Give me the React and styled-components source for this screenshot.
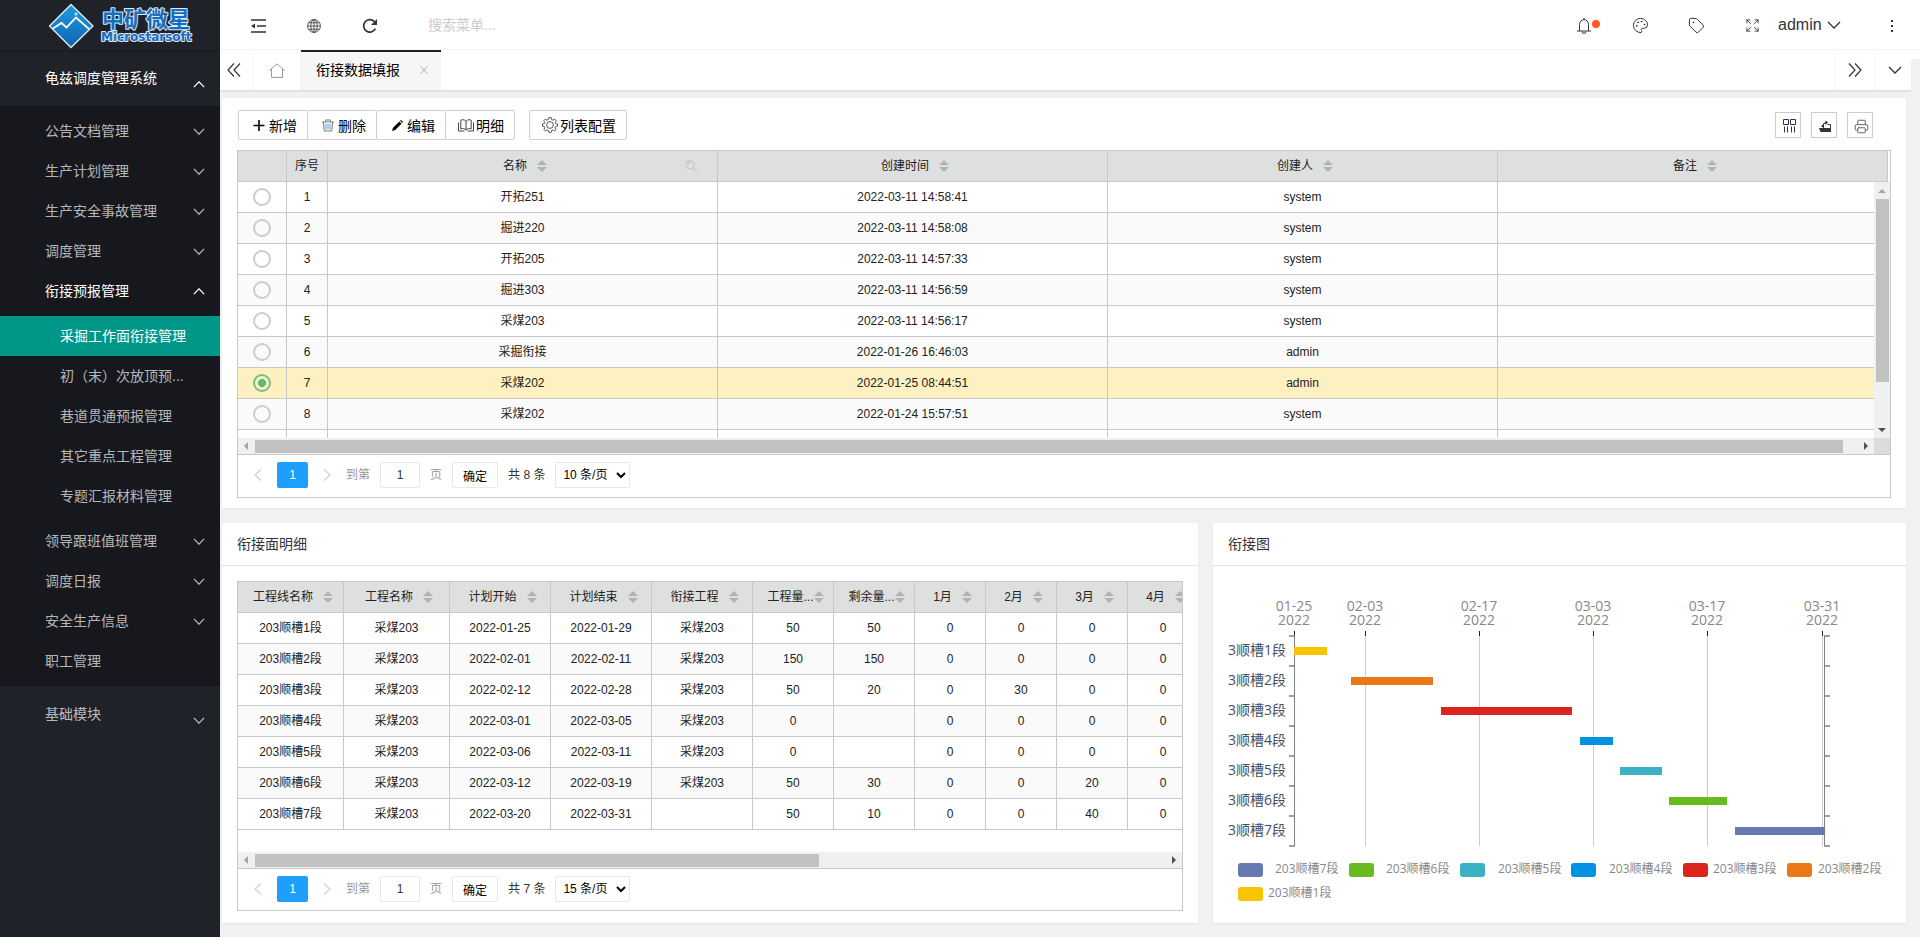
import { useState } from "react"
import styled, { createGlobalStyle, css } from "styled-components"
import { Expand, Palette, Printer, Tag } from "lucide-react"

const GlobalStyle = createGlobalStyle`
    * {
        box-sizing: border-box;
    }
    body {
        margin: 0;
        background-color: #f1f1f1;
        color: #333;
        font: 14px/24px "Liberation Sans", "Noto Sans CJK SC", sans-serif;
    }
    button, input, select {
        font-family: inherit;
    }
    svg {
        display: block;
    }
`;

const Container = styled.div`
    display: flex;
    min-height: 100vh;
`;

/* ---------- sidebar ---------- */

const Side = styled.nav`
    flex: 0 0 220px;
    background-color: #20222a;
    overflow: hidden;
`;

const Logo = styled.div`
    height: 50px;
    padding-left: 48px;
    box-shadow: 0 1px 2px rgba(0, 0, 0, 0.25);
`;

const SideGroup = styled.a`
    display: flex;
    align-items: center;
    justify-content: space-between;
    height: 56px;
    padding: 0 15px 0 45px;
    text-decoration: none;
    color: ${props => props.$open ? "#fff" : "rgba(255, 255, 255, 0.7)"};

    svg {
        margin-top: 12px;
    }
`;

const SubMenu = styled.div`
    padding: 5px 0;
    background-color: #16181d;
`;

const SubItem = styled.a`
    display: flex;
    align-items: center;
    justify-content: space-between;
    height: 40px;
    padding: 0 15px 0 45px;
    text-decoration: none;
    color: ${props => props.$open ? "#fff" : "rgba(255, 255, 255, 0.7)"};
`;

const LeafList = styled.div`
    padding: 5px 0;
`;

const Leaf = styled.a`
    display: block;
    height: 40px;
    padding-left: 60px;
    line-height: 40px;
    text-decoration: none;
    color: ${props => props.$active ? "#fff" : "rgba(255, 255, 255, 0.7)"};
    background-color: ${props => props.$active ? "#009688" : "transparent"};
`;

/* ---------- header ---------- */

const Main = styled.div`
    flex: 1;
    min-width: 0;
    position: relative;
`;

const Header = styled.header`
    display: flex;
    justify-content: space-between;
    height: 50px;
    padding-left: 10px;
    background-color: #fff;
    border-bottom: 1px solid #f6f6f6;
`;

const HeaderSide = styled.div`
    display: flex;
    align-items: center;
`;

const HeaderButton = styled.button`
    position: relative;
    display: flex;
    align-items: center;
    justify-content: center;
    width: 56px;
    height: 50px;
    padding: 2px 0 0;
    border: 0;
    background: none;
    color: #333;
`;

const Dot = styled.span`
    position: absolute;
    left: 36px;
    top: 20px;
    width: 8px;
    height: 8px;
    border-radius: 50%;
    background-color: #ff5722;
`;

const Search = styled.input`
    width: 160px;
    height: 30px;
    margin-left: 28px;
    padding: 0 2px;
    border: 0;
    outline: none;
    font-size: 14px;

    &::placeholder {
        color: #ccc;
    }
`;

const User = styled.button`
    display: flex;
    align-items: center;
    gap: 5px;
    width: 86px;
    height: 50px;
    margin-left: -2px;
    padding: 0;
    border: 0;
    background: none;
    color: #333;
    font-size: 16px;
`;

const Tabs = styled.div`
    display: flex;
    height: 40px;
    background-color: #fff;
    box-shadow: 0 1px 2px rgba(0, 0, 0, 0.12);
`;

const TabControl = styled.button`
    display: flex;
    align-items: center;
    justify-content: center;
    width: ${props => props.$width}px;
    padding: 0 6px 0 0;
    border: 0;
    border-right: ${props => props.$side === "right" ? "1px solid #f6f6f6" : "0"};
    border-left: ${props => props.$side === "left" ? "1px solid #f6f6f6" : "0"};
    background: none;
    color: #333;
`;

const TabControlCentered = styled(TabControl)`
    padding: 0;
`;

const Tab = styled.div`
    display: flex;
    align-items: center;
    justify-content: space-between;
    width: 140px;
    padding: 0 13px 2px 15px;
    border-top: 2px solid #20222a;
    background-color: #f6f6f6;
    color: #000;
    margin-right: auto;
`;

const TabClose = styled.button`
    display: flex;
    padding: 0;
    border: 0;
    background: none;
    color: #c2c2c2;
`;

/* the page frame's own scroll track, it lies over the tab bar's end */
const FrameTrack = styled.div`
    position: absolute;
    top: 59px;
    right: 0;
    bottom: 0;
    width: 9px;
    background-color: #f1f1f1;
`;

/* ---------- cards ---------- */

const Content = styled.main`
    display: flex;
    flex-direction: column;
    gap: 15px;
    padding: 8px 14px 14px 2px;
`;

const Row = styled.div`
    display: grid;
    grid-template-columns: 976fr 693fr;
    gap: 15px;
`;

const Card = styled.section`
    min-width: 0;
    border-radius: 2px;
    background-color: #fff;
    box-shadow: 0 1px 2px rgba(0, 0, 0, 0.05);
`;

const CardTitle = styled.h2`
    height: 43px;
    margin: 0;
    padding: 0 15px;
    border-bottom: 1px solid #e2e2e2;
    font-size: 14px;
    font-weight: normal;
    line-height: 42px;
`;

const CardBody = styled.div`
    padding: ${props => props.$top}px 15px ${props => props.$bottom}px;
`;

const Toolbar = styled.div`
    display: flex;
    justify-content: space-between;
    align-items: center;
    height: 30px;
    margin-bottom: 10px;
    padding: 0 18px 0 1px;
`;

const ButtonGroup = styled.div`
    display: flex;
`;

const ToolButton = styled.button`
    display: flex;
    align-items: center;
    justify-content: center;
    gap: 2px;
    width: ${props => props.$wide ? 98 : 70}px;
    height: 30px;
    margin-left: ${props => props.$wide ? 14 : -1}px;
    padding: 0 0 0 2px;
    border: 1px solid #d0d0d0;
    border-radius: 2px;
    background-color: #fff;
    color: #000;
    font-size: 14px;
    white-space: nowrap;

    &:first-child {
        margin-left: 0;
    }
`;

const IconTools = styled.div`
    display: flex;
    gap: 10px;
`;

const IconTool = styled.button`
    display: flex;
    align-items: center;
    justify-content: center;
    width: 26px;
    height: 26px;
    padding: 2px 0 0 2px;
    border: 1px solid #ccc;
    background-color: #fff;
    color: #333;
`;

/* ---------- tables ---------- */

const TableBox = styled.div`
    border: 1px solid #c8c8c8;
    overflow: hidden;
`;

const Table = styled.table`
    width: ${props => props.$width};
    table-layout: fixed;
    border-collapse: separate;
    border-spacing: 0;
    font-size: 12px;
    line-height: 30px;
`;

const cell = css`
    height: 31px;
    padding: 0;
    border-right: 1px solid #c8c8c8;
    border-bottom: 1px solid #c8c8c8;
    text-align: center;
    font-weight: normal;
    white-space: nowrap;
    color: #222;
`;

const Th = styled.th`
    ${cell}
    background-color: #dee0df;
`;

const Td = styled.td`
    ${cell}
`;

const Tr = styled.tr`
    background-color: ${props => props.$selected ? "#fef1c1" : "#fff"};

    &:nth-child(even) {
        background-color: ${props => props.$selected ? "#fef1c1" : "#fafafa"};
    }
`;

const HeadCell = styled.div`
    position: relative;
    display: flex;
    align-items: center;
    justify-content: center;
    gap: ${props => props.$tight ? 0 : 10}px;
    margin-right: -5px;
`;

const ColumnFilter = styled.span`
    position: absolute;
    right: 25px;
    color: #c8c8c8;
`;

const BodyRow = styled.div`
    display: flex;
    height: ${props => props.$height}px;
`;

const BodyView = styled.div`
    flex: 1;
    min-width: 0;
    overflow: hidden;
`;

const Radio = styled.input`
    appearance: none;
    display: block;
    width: 18px;
    height: 18px;
    margin: 0 auto;
    border: 2px solid #ccc;
    border-radius: 50%;

    &:checked {
        border-color: #75c08a;
        background: radial-gradient(circle, #5fb878 0 4px, transparent 4px);
        background-clip: border-box;
        background-origin: border-box;
    }
`;

const VScroll = styled.div`
    flex: 0 0 16px;
    display: flex;
    flex-direction: column;
    align-items: center;
    background-color: #f0f0f0;
`;

const HScroll = styled.div`
    display: flex;
    align-items: center;
    height: 16px;
    background-color: #f0f0f0;
`;

const ScrollArrow = styled.span`
    flex: 0 0 17px;
    display: flex;
    align-items: center;
    justify-content: center;
    color: ${props => props.$off ? "#a3a3a3" : "#505050"};
`;

const HTrack = styled.div`
    flex: 1;
`;

const HThumb = styled.div`
    width: ${props => props.$size};
    height: 13px;
    background-color: #c1c1c1;
`;

const VTrack = styled.div`
    flex: 1;
    width: 13px;
`;

const VThumb = styled.div`
    height: 183px;
    background-color: #c1c1c1;
`;

const Corner = styled.div`
    flex: 0 0 16px;
    height: 16px;
    background-color: #dcdcdc;
`;

/* ---------- pager ---------- */

const PagerBar = styled.div`
    display: flex;
    align-items: flex-start;
    height: ${props => props.$height}px;
    padding: 7px 0 0 1px;
    border-top: 1px solid #c8c8c8;
    font-size: 12px;
    line-height: 26px;
`;

const PageArrow = styled.button`
    display: flex;
    align-items: center;
    justify-content: center;
    width: 38px;
    height: 26px;
    padding: 0;
    border: 0;
    background: none;
    color: #d2d2d2;
`;

const PageNumber = styled.button`
    width: 31px;
    height: 26px;
    padding: 0;
    border: 0;
    border-radius: 2px;
    background-color: #1e9fff;
    color: #fff;
    font-size: 12px;
`;

const Jump = styled.label`
    display: flex;
    gap: 10px;
    color: #999;
`;

const PageInput = styled.input`
    width: 40px;
    height: 26px;
    padding: 0;
    border: 1px solid #e8e8e8;
    border-radius: 2px;
    text-align: center;
    font-size: 12px;
    color: #333;
`;

const Confirm = styled.button`
    width: 46px;
    height: 26px;
    margin-left: 10px;
    padding: 0;
    border: 1px solid #e8e8e8;
    border-radius: 2px;
    background-color: #fff;
    color: #000;
    font-size: 12px;
`;

const Total = styled.span`
    margin: 0 10px;
`;

const PageSize = styled.select`
    width: 75px;
    height: 26px;
    padding: 0 0 0 3px;
    border: 1px solid #e8e8e8;
    border-radius: 2px;
    background-color: #fff;
    color: #000;
    font-size: 12px;
`;

const Chart = styled.svg`
    width: 100%;
    font-family: "Open Sans", "Noto Sans CJK SC", sans-serif;
`;

/* ---------- icons ---------- */

const chevrons = {
  down: "M1 1 L7 7 L13 1",
  up: "M1 7 L7 1 L13 7",
}

const Chevron = ({ dir = "down", width = 12, height = 7, stroke = 1.5 }) => (
  <svg width={width} height={height} viewBox="0 0 14 8" preserveAspectRatio="none" fill="none" stroke="currentColor" strokeWidth={stroke}>
    <path d={chevrons[dir]} />
  </svg>
)

const DoubleChevron = ({ right }) => (
  <svg width="16" height="16" viewBox="0 0 16 16" fill="none" stroke="currentColor" strokeWidth="1.2">
    <path d={right ? "M2 1.5 L8 8 L2 14.5 M8 1.5 L14 8 L8 14.5" : "M8 1.5 L2 8 L8 14.5 M14 1.5 L8 8 L14 14.5"} />
  </svg>
)

const SortIcon = () => (
  <svg width="10" height="12" viewBox="0 0 10 12" fill="#b2b2b2">
    <path d="M5 0 L10 5 H0 Z M0 7 H10 L5 12 Z" />
  </svg>
)

const Triangle = ({ dir }) => {
  const shapes = {
    left: "M6 1 V9 L2 5 Z",
    right: "M3 1 V9 L7 5 Z",
    up: "M1 7 H9 L5 3 Z",
    down: "M1 3 H9 L5 7 Z",
  }
  return (
    <svg width="10" height="10" viewBox="0 0 10 10" fill="currentColor">
      <path d={shapes[dir]} />
    </svg>
  )
}

const IndentIcon = () => (
  <svg width="16" height="14" viewBox="0 0 16 14" fill="none" stroke="currentColor" strokeWidth="1.4">
    <path d="M1 1 H16 M7 7 H16 M1 13 H16" />
    <path d="M5 4.5 V9.5 L1 7 Z" fill="currentColor" stroke="none" />
  </svg>
)

const GlobeIcon = () => (
  <svg width="14" height="14" viewBox="0 0 14 14" fill="none" stroke="currentColor" strokeWidth="0.8">
    <circle cx="7" cy="7" r="6.4" />
    <ellipse cx="7" cy="7" rx="3.2" ry="6.4" />
    <path d="M7 0.6 V13.4 M0.6 7 H13.4 M1.6 3.8 H12.4 M1.6 10.2 H12.4" />
  </svg>
)

const ReloadIcon = () => (
  <svg width="16" height="16" viewBox="0 0 16 16" fill="none" stroke="currentColor" strokeWidth="1.7">
    <path d="M13.4 10.6 A6.2 6.2 0 1 1 12.4 3.6" />
    <path d="M15 1 V7 H9 Z" fill="currentColor" stroke="none" />
  </svg>
)

const BellIcon = () => (
  <svg width="14" height="16" viewBox="0 0 14 16" fill="none" stroke="currentColor" strokeWidth="1">
    <path d="M0 13 H14 M2.5 13 V6.5 A4.5 4.9 0 0 1 11.5 6.5 V13 M5 13.5 A2 1.8 0 0 0 9 13.5 M7 0 V1.6" />
  </svg>
)

const MoreIcon = () => (
  <svg width="4" height="14" viewBox="0 0 4 14" fill="currentColor">
    <rect x="1" y="1" width="2" height="2" />
    <rect x="1" y="6" width="2" height="2" />
    <rect x="1" y="11" width="2" height="2" />
  </svg>
)

const HomeIcon = () => (
  <svg width="16" height="15" viewBox="0 0 16 15" fill="none" stroke="#999" strokeWidth="1">
    <path d="M0.4 7.6 L8 0.8 L15.6 7.6 M2.5 6 V14.4 H13.5 V6" />
  </svg>
)

const CloseIcon = () => (
  <svg width="8" height="8" viewBox="0 0 8 8" fill="none" stroke="currentColor" strokeWidth="1.1">
    <path d="M0.5 0.5 L7.5 7.5 M7.5 0.5 L0.5 7.5" />
  </svg>
)

const ToolIcon = ({ children }) => (
  <svg width="16" height="16" viewBox="0 0 16 16" fill="none" stroke="#000" strokeWidth="1">{children}</svg>
)

const PlusIcon = () => (
  <ToolIcon><path d="M2.5 8.5 H13.5 M8 3 V14" strokeWidth="1.6" /></ToolIcon>
)

const TrashIcon = () => (
  <ToolIcon>
    <path d="M2 5 H14 M5.5 4.5 V3 H10.5 V4.5 M3.5 5 L4.2 14 H11.8 L12.5 5" stroke="#777" />
    <path d="M6 7 V12.5 M8 7 V12.5 M10 7 V12.5" stroke="#5b9bd0" />
  </ToolIcon>
)

const PencilIcon = () => (
  <ToolIcon>
    <path d="M3 14 L4 10.8 L10.3 4.5 L12.5 6.7 L6.2 13 Z M11 3.8 L12 2.9 L14 4.9 L13.2 6 Z" fill="#000" stroke="none" />
  </ToolIcon>
)

const BookIcon = () => (
  <ToolIcon>
    <path d="M8 4.5 C6.5 2.3 4 2.5 2.8 3.2 V12 C4.5 11.2 6.6 11.5 8 13 C9.4 11.5 11.5 11.2 13.2 12 V3.2 C12 2.5 9.5 2.3 8 4.5 V13 M0.5 5.5 V14 H6.5 M15.5 5.5 V14 H9.5" stroke="#444" />
  </ToolIcon>
)

const GearIcon = () => (
  <ToolIcon>
    <circle cx="8" cy="8" r="3.4" stroke="#444" strokeWidth="0.9" />
    <path
      d="M6.8 0.6 H9.2 L9.6 2.6 L11 3.2 L12.7 2.1 L14.3 3.8 L13.1 5.4 L13.6 6.6 L15.5 7 V9.2 L13.6 9.6 L13.1 10.8 L14.2 12.5 L12.6 14 L11 12.9 L9.6 13.5 L9.2 15.4 H6.8 L6.4 13.5 L5 12.9 L3.4 14 L1.8 12.5 L2.9 10.8 L2.4 9.6 L0.5 9.2 V7 L2.4 6.6 L2.9 5.4 L1.7 3.8 L3.3 2.1 L5 3.2 L6.4 2.6 Z"
      stroke="#444"
      strokeWidth="0.9"
    />
  </ToolIcon>
)

const ColumnsIcon = () => (
  <svg width="14" height="14" viewBox="0 0 14 14" fill="none" stroke="#3d2a4d" strokeWidth="1">
    <path d="M1.5 0.5 H6.5 V5.5 H1.5 Z M8.5 0.5 H13.5 V5.5 H8.5 Z M2.5 7.5 V13.5 M5.5 7.5 V13.5 M9.5 7.5 V13.5 M12.5 7.5 V13.5" />
  </svg>
)

const ExportIcon = () => (
  <svg width="14" height="14" viewBox="0 0 14 14" fill="#333">
    <path d="M1 9 H13 L13 13 H2.5 Z M3 8 L4.5 5.5 H5.5 V8 Z" />
    <path d="M5 6 C5 4 6 3.2 7.5 3.2 V1.2 L10 3.6 L7.5 6 V4.4 C6.6 4.4 6 5 6 6 Z" />
    <path d="M9.5 5.5 H12.5 V9.5 M5.5 5.5 V9" fill="none" stroke="#333" />
  </svg>
)

const SearchIcon = () => (
  <svg width="12" height="12" viewBox="0 0 12 12" fill="none" stroke="currentColor" strokeWidth="1.3">
    <circle cx="5" cy="5" r="4" />
    <path d="M8 8 L11.4 11.4 M3 4 A2 2 0 0 1 5 3" />
  </svg>
)

const LogoMark = () => (
  <svg width="146" height="50" viewBox="0 0 146 50" role="img" aria-label="中矿微星">
    <defs>
      <linearGradient id="diamond" x1="0" y1="0" x2="0" y2="1">
        <stop offset="0" stopColor="#1d9be2" />
        <stop offset="1" stopColor="#1263ad" />
      </linearGradient>
    </defs>
    <path d="M23 4.5 L45 26 L23 47.5 L1.5 26 Z" fill="url(#diamond)" stroke="#dcebf7" strokeWidth="1.4" strokeLinejoin="round" />
    <path d="M5 28.5 L13.5 23 L18.5 27.5 L28 17.5 L41 29" fill="none" stroke="#fff" strokeWidth="1.8" />
    <circle cx="28" cy="14" r="1.6" fill="#bfe0f7" />
    <g fill="#1a6cbc" stroke="#dcebf7" strokeWidth="2" paintOrder="stroke" strokeLinejoin="round" fontWeight="700">
      <text x="54" y="27" fontSize="22" fontFamily="Noto Sans CJK SC, sans-serif">中矿微星</text>
      <text x="53" y="41" fontSize="12" fontFamily="DejaVu Sans, sans-serif">Microstarsoft</text>
    </g>
  </svg>
)

/* ---------- data ---------- */

const menu = [
  { name: "公告文档管理", arrow: true },
  { name: "生产计划管理", arrow: true },
  { name: "生产安全事故管理", arrow: true },
  { name: "调度管理", arrow: true },
  {
    name: "衔接预报管理",
    arrow: true,
    children: ["采掘工作面衔接管理", "初（末）次放顶预...", "巷道贯通预报管理", "其它重点工程管理", "专题汇报材料管理"],
  },
  { name: "领导跟班值班管理", arrow: true },
  { name: "调度日报", arrow: true },
  { name: "安全生产信息", arrow: true },
  { name: "职工管理" },
]

const reports = [
  ["开拓251", "2022-03-11 14:58:41", "system"],
  ["掘进220", "2022-03-11 14:58:08", "system"],
  ["开拓205", "2022-03-11 14:57:33", "system"],
  ["掘进303", "2022-03-11 14:56:59", "system"],
  ["采煤203", "2022-03-11 14:56:17", "system"],
  ["采掘衔接", "2022-01-26 16:46:03", "admin"],
  ["采煤202", "2022-01-25 08:44:51", "admin"],
  ["采煤202", "2022-01-24 15:57:51", "system"],
]

const detailColumns = [
  ["工程线名称", 106],
  ["工程名称", 106],
  ["计划开始", 101],
  ["计划结束", 101],
  ["衔接工程", 101],
  ["工程量...", 81],
  ["剩余量...", 81],
  ["1月", 71],
  ["2月", 71],
  ["3月", 71],
  ["4月", 71],
]

const details = [
  ["203顺槽1段", "采煤203", "2022-01-25", "2022-01-29", "采煤203", "50", "50", "0", "0", "0", "0"],
  ["203顺槽2段", "采煤203", "2022-02-01", "2022-02-11", "采煤203", "150", "150", "0", "0", "0", "0"],
  ["203顺槽3段", "采煤203", "2022-02-12", "2022-02-28", "采煤203", "50", "20", "0", "30", "0", "0"],
  ["203顺槽4段", "采煤203", "2022-03-01", "2022-03-05", "采煤203", "0", "", "0", "0", "0", "0"],
  ["203顺槽5段", "采煤203", "2022-03-06", "2022-03-11", "采煤203", "0", "", "0", "0", "0", "0"],
  ["203顺槽6段", "采煤203", "2022-03-12", "2022-03-19", "采煤203", "50", "30", "0", "0", "20", "0"],
  ["203顺槽7段", "采煤203", "2022-03-20", "2022-03-31", "", "50", "10", "0", "0", "40", "0"],
]

const chartDates = [
  ["01-25", 81],
  ["02-03", 152],
  ["02-17", 266],
  ["03-03", 380],
  ["03-17", 494],
  ["03-31", 609],
]

const chartBars = [
  { n: 1, x: 81, w: 33, color: "#f8c400" },
  { n: 2, x: 138, w: 82, color: "#e97917" },
  { n: 3, x: 228, w: 131, color: "#db241d" },
  { n: 4, x: 367, w: 33, color: "#0292e2" },
  { n: 5, x: 407, w: 42, color: "#3bb2c4" },
  { n: 6, x: 456, w: 58, color: "#68ba1e" },
  { n: 7, x: 522, w: 90, color: "#6679b3" },
]

const chartLegend = [
  { n: 7, x: 25, text: 62, y: 297 },
  { n: 6, x: 136, text: 173, y: 297 },
  { n: 5, x: 247, text: 285, y: 297 },
  { n: 4, x: 358, text: 396, y: 297 },
  { n: 3, x: 470, text: 500, y: 297 },
  { n: 2, x: 574, text: 605, y: 297 },
  { n: 1, x: 25, text: 55, y: 321 },
]

/* ---------- parts ---------- */

const Sidebar = () => (
  <Side>
    <Logo><LogoMark /></Logo>
    <SideGroup href="#" $open>龟兹调度管理系统<Chevron dir="up" /></SideGroup>
    <SubMenu>
      {menu.map(item => (
        <div key={item.name}>
          <SubItem href="#" $open={!!item.children}>
            {item.name}
            {item.arrow && <Chevron dir={item.children ? "up" : "down"} />}
          </SubItem>
          {item.children && (
            <LeafList>
              {item.children.map((name, i) => (
                <Leaf href="#" key={name} $active={i === 0}>{name}</Leaf>
              ))}
            </LeafList>
          )}
        </div>
      ))}
    </SubMenu>
    <SideGroup href="#">基础模块<Chevron /></SideGroup>
  </Side>
)

const TopBar = () => (
  <Header>
    <HeaderSide>
      <HeaderButton aria-label="侧边伸缩"><IndentIcon /></HeaderButton>
      <HeaderButton aria-label="前台"><GlobeIcon /></HeaderButton>
      <HeaderButton aria-label="刷新"><ReloadIcon /></HeaderButton>
      <Search placeholder="搜索菜单..." aria-label="搜索菜单" />
    </HeaderSide>
    <HeaderSide>
      <HeaderButton aria-label="消息"><BellIcon /><Dot /></HeaderButton>
      <HeaderButton aria-label="主题"><Palette size={17} strokeWidth={1.4} /></HeaderButton>
      <HeaderButton aria-label="便签"><Tag size={17} strokeWidth={1.4} /></HeaderButton>
      <HeaderButton aria-label="全屏"><Expand size={15} strokeWidth={1.4} /></HeaderButton>
      <User>admin<Chevron width={14} height={8} stroke={1.3} /></User>
      <HeaderButton aria-label="更多"><MoreIcon /></HeaderButton>
    </HeaderSide>
  </Header>
)

const TabBar = () => (
  <Tabs>
    <TabControl $width={34} $side="right" aria-label="向左"><DoubleChevron /></TabControl>
    <TabControlCentered $width={47} $side="right" aria-label="首页"><HomeIcon /></TabControlCentered>
    <Tab>
      衔接数据填报
      <TabClose aria-label="关闭"><CloseIcon /></TabClose>
    </Tab>
    <TabControlCentered $width={40} $side="left" aria-label="向右"><DoubleChevron right /></TabControlCentered>
    <TabControl $width={46} $side="left" aria-label="标签操作"><Chevron width={14} height={8} stroke={1.3} /></TabControl>
  </Tabs>
)

const SortHead = ({ children, filter }) => (
  <HeadCell $tight={children.endsWith("...")}>
    {children}
    <SortIcon />
    {filter && <ColumnFilter><SearchIcon /></ColumnFilter>}
  </HeadCell>
)

const Pager = ({ total, size, height }) => (
  <PagerBar $height={height}>
    <PageArrow aria-label="上一页">
      <svg width="8" height="12" viewBox="0 0 8 12" fill="none" stroke="currentColor" strokeWidth="1.3"><path d="M7 0.5 L1 6 L7 11.5" /></svg>
    </PageArrow>
    <PageNumber>1</PageNumber>
    <PageArrow aria-label="下一页">
      <svg width="8" height="12" viewBox="0 0 8 12" fill="none" stroke="currentColor" strokeWidth="1.3"><path d="M1 0.5 L7 6 L1 11.5" /></svg>
    </PageArrow>
    <Jump>
      到第
      <PageInput defaultValue="1" />
      页
    </Jump>
    <Confirm>确定</Confirm>
    <Total>共 {total} 条</Total>
    <PageSize aria-label="每页条数" defaultValue={size}>
      <option value={size}>{size} 条/页</option>
    </PageSize>
  </PagerBar>
)

const ReportCols = () => (
  <colgroup>
    <col width="49" />
    <col width="41" />
    <col />
    <col />
    <col />
    <col />
  </colgroup>
)

const ReportTable = () => {
  const [selected, setSelected] = useState(6)

  return (
    <TableBox>
      <Table $width="calc(100% - 2px)">
        <ReportCols />
        <thead>
          <tr>
            <Th></Th>
            <Th>序号</Th>
            <Th><SortHead filter>名称</SortHead></Th>
            <Th><SortHead>创建时间</SortHead></Th>
            <Th><SortHead>创建人</SortHead></Th>
            <Th><SortHead>备注</SortHead></Th>
          </tr>
        </thead>
      </Table>
      <BodyRow $height={256}>
        <BodyView>
          <Table $width="calc(100% + 14px)">
            <ReportCols />
            <tbody>
              {reports.map((row, i) => (
                <Tr key={i} $selected={i === selected}>
                  <Td>
                    <Radio
                      type="radio"
                      name="report"
                      aria-label={row[0]}
                      checked={i === selected}
                      onChange={() => setSelected(i)}
                    />
                  </Td>
                  <Td>{i + 1}</Td>
                  <Td>{row[0]}</Td>
                  <Td>{row[1]}</Td>
                  <Td>{row[2]}</Td>
                  <Td></Td>
                </Tr>
              ))}
              <Tr>
                <Td></Td>
                <Td></Td>
                <Td></Td>
                <Td></Td>
                <Td></Td>
                <Td></Td>
              </Tr>
            </tbody>
          </Table>
        </BodyView>
        <VScroll>
          <ScrollArrow $off><Triangle dir="up" /></ScrollArrow>
          <VTrack><VThumb /></VTrack>
          <ScrollArrow><Triangle dir="down" /></ScrollArrow>
        </VScroll>
      </BodyRow>
      <HScroll>
        <ScrollArrow $off><Triangle dir="left" /></ScrollArrow>
        <HTrack><HThumb $size="calc(100% - 14px)" /></HTrack>
        <ScrollArrow><Triangle dir="right" /></ScrollArrow>
        <Corner />
      </HScroll>
      <Pager total={8} size={10} height={43} />
    </TableBox>
  )
}

const DetailTable = () => (
  <TableBox>
    <BodyRow $height={270}>
      <BodyView>
        <Table $width="961px">
          <colgroup>
            {detailColumns.map(([name, width]) => <col key={name} width={width} />)}
          </colgroup>
          <thead>
            <tr>
              {detailColumns.map(([name]) => <Th key={name}><SortHead>{name}</SortHead></Th>)}
            </tr>
          </thead>
          <tbody>
            {details.map(row => (
              <Tr key={row[0]}>
                {row.map((value, i) => <Td key={i}>{value}</Td>)}
              </Tr>
            ))}
          </tbody>
        </Table>
      </BodyView>
    </BodyRow>
    <HScroll>
      <ScrollArrow $off><Triangle dir="left" /></ScrollArrow>
      <HTrack><HThumb $size="62%" /></HTrack>
      <ScrollArrow><Triangle dir="right" /></ScrollArrow>
    </HScroll>
    <Pager total={7} size={15} height={42} />
  </TableBox>
)

const GanttChart = () => {
  const ticks = [0, 1, 2, 3, 4, 5, 6, 7].map(i => 70 + i * 30)

  return (
    <Chart viewBox="0 0 693 357" role="img" aria-label="衔接图">
      {chartDates.map(([date, x]) => (
        <g key={date}>
          <rect x={x} y="70" width="1" height="210" fill="#ccc" />
          <rect x={x} y="65" width="1" height="5" fill="#222" />
          <text y="45" fontSize="14" fill="#888" textAnchor="middle">
            <tspan x={x}>{date}</tspan>
            <tspan x={x} dy="14">2022</tspan>
          </text>
        </g>
      ))}
      <rect x="81" y="70" width="1" height="210" fill="#808080" />
      <rect x="611" y="70" width="1" height="210" fill="#808080" />
      {ticks.map(y => (
        <g key={y} stroke="#808080" strokeWidth="1.5">
          <line x1="76" x2="82" y1={y} y2={y} />
          <line x1="611" x2="617" y1={y} y2={y} />
        </g>
      ))}
      {chartBars.map(bar => (
        <g key={bar.n}>
          <text x="73" y={59 + bar.n * 30} fontSize="14" fill="#464f5e" textAnchor="end">3顺槽{bar.n}段</text>
          <rect x={bar.x} y={51 + bar.n * 30} width={bar.w} height="8" fill={bar.color} />
        </g>
      ))}
      {chartLegend.map(item => (
        <g key={item.n}>
          <rect x={item.x} y={item.y} width="25" height="14" rx="3" fill={chartBars[item.n - 1].color} />
          <text x={item.text} y={item.y + 10} fontSize="12" fill="#888">203顺槽{item.n}段</text>
        </g>
      ))}
    </Chart>
  )
}

const App = () => {
  return (
    <Container>
      <GlobalStyle />
      <Sidebar />
      <Main>
        <TopBar />
        <TabBar />
        <Content>
          <Card>
            <CardBody $top={12} $bottom={10}>
              <Toolbar>
                <ButtonGroup>
                  <ToolButton><PlusIcon />新增</ToolButton>
                  <ToolButton><TrashIcon />删除</ToolButton>
                  <ToolButton><PencilIcon />编辑</ToolButton>
                  <ToolButton><BookIcon />明细</ToolButton>
                  <ToolButton $wide><GearIcon />列表配置</ToolButton>
                </ButtonGroup>
                <IconTools>
                  <IconTool aria-label="筛选列"><ColumnsIcon /></IconTool>
                  <IconTool aria-label="导出"><ExportIcon /></IconTool>
                  <IconTool aria-label="打印"><Printer size={15} strokeWidth={1.6} color="#666" /></IconTool>
                </IconTools>
              </Toolbar>
              <ReportTable />
            </CardBody>
          </Card>
          <Row>
            <Card>
              <CardTitle>衔接面明细</CardTitle>
              <CardBody $top={15} $bottom={12}>
                <DetailTable />
              </CardBody>
            </Card>
            <Card>
              <CardTitle>衔接图</CardTitle>
              <GanttChart />
            </Card>
          </Row>
        </Content>
        <FrameTrack />
      </Main>
    </Container>
  )
}

export default App
